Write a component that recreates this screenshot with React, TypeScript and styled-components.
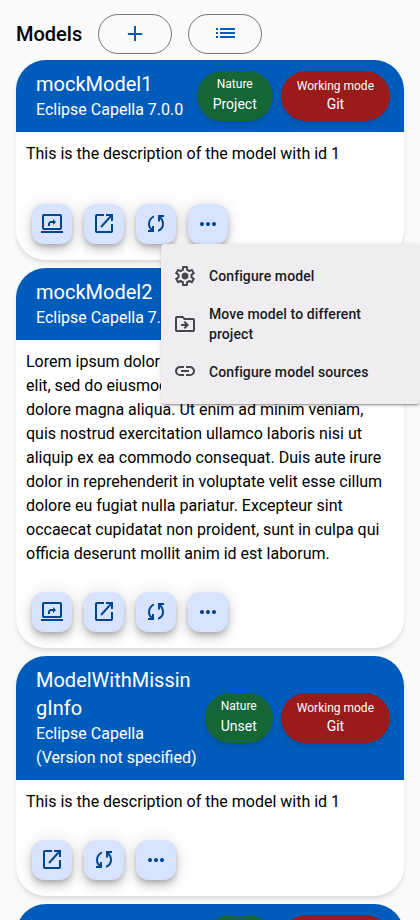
import React from "react";
import styled, { createGlobalStyle } from "styled-components";

const GlobalStyle = createGlobalStyle`
  *, *::before, *::after { box-sizing: border-box; }
  html, body { margin: 0; height: 100%; overflow: hidden; }
  body {
    background: #fafafa;
    color: #000;
    font-family: Roboto, sans-serif;
    font-size: 16px;
    line-height: 24px;
  }
`;

const icons = {
  add: "M440-440H195v-80h245v-280h80v280h250v80H520v240h-80v-240Z",
  list: "M280-640v-80h600v80H280Zm0 160v-80h600v80H280Zm0 160v-80h600v80H280ZM120-640v-80h80v80h-80Zm0 160v-80h80v80h-80Zm0 160v-80h80v80h-80Z",
  share:
    "M320-400h80v-80q0-17 11.5-28.5T440-520h80v80l120-120-120-120v80h-80q-50 0-85 35t-35 85v120ZM160-240q-33 0-56.5-23.5T80-320v-480q0-33 23.5-56.5T160-880h640q33 0 56.5 23.5T880-800v480q0 33-23.5 56.5T800-240H160Zm0-80h640v-480H160v480ZM40-120v-80h880v80H40Z",
  open: "M200-120q-33 0-56.5-23.5T120-200v-600q0-33 23.5-56.5T200-880h280v80H200v600h560v-280h80v280q0 33-23.5 56.5T760-120H200Zm188-212-56-56 372-412H560v-80h280v280h-80v-144L388-332Z",
  sync: "M160-160v-80h110l-16-14q-52-46-73-105t-21-119q0-111 66.5-207.5T400-820v84q-72 26-116 98.5T240-478q0 45 17 87.5t53 78.5l10 10v-98h80v240H160Zm400-10v-84q72-26 116-88.5T720-482q0-45-17-97.5T650-678l-10-10v108h-80v-260h240v80H690l16 24q49 49 71.5 126.5T800-482q0 111-66.5 197.5T560-170Z",
  more: "M240-400q-33 0-56.5-23.5T160-480q0-33 23.5-56.5T240-560q33 0 56.5 23.5T320-480q0 33-23.5 56.5T240-400Zm240 0q-33 0-56.5-23.5T400-480q0-33 23.5-56.5T480-560q33 0 56.5 23.5T560-480q0 33-23.5 56.5T480-400Zm240 0q-33 0-56.5-23.5T640-480q0-33 23.5-56.5T720-560q33 0 56.5 23.5T800-480q0 33-23.5 56.5T720-400Z",
  settings:
    "m370-80-16-128q-13-5-24.5-12T307-235l-119 50L78-375l103-78q-1-7-1-13.5v-27q0-6.5 1-13.5L78-585l110-190 119 50q11-8 23-15t24-12l16-128h220l16 128q13 5 24.5 12t22.5 15l119-50 110 190-103 78q1 7 1 13.5v27q0 6.5-2 13.5l103 78-110 190-118-50q-11 8-23 15t-24 12L590-80H370Zm70-80h79l14-106q31-8 57.5-23.5T639-327l99 41 39-68-86-65q5-14 7-29.5t2-31.5q0-16-2-31.5t-7-29.5l86-65-39-68-99 42q-22-23-48.5-38.5T533-694l-13-106h-79l-14 106q-31 8-57.5 23.5T321-633l-99-41-39 68 86 64q-5 15-7 30t-2 32q0 16 2 31t7 30l-86 65 39 68 99-42q22 23 48.5 38.5T427-266l13 106Zm42-180q58 0 99-41t41-99q0-58-41-99t-99-41q-59 0-99.5 41T342-480q0 58 40.5 99t99.5 41Z",
  move: "m488-400-64 64 56 56 160-160-160-160-56 56 64 64H320v80h168ZM160-160q-33 0-56.5-23.5T80-240v-480q0-33 23.5-56.5T160-800h240l80 80h320q33 0 56.5 23.5T880-640v400q0 33-23.5 56.5T800-160H160Zm0-80h640v-400H447l-80-80H160v480Z",
  link: "M440-320H280q-83 0-141.5-58.5T80-520q0-83 58.5-141.5T280-720h160v80H280q-50 0-85 35t-35 85q0 50 35 85t85 35h160v80ZM320-480v-80h320v80H320Zm200 160v-80h160q50 0 85-35t35-85q0-50-35-85t-85-35H520v-80h160q83 0 141.5 58.5T880-520q0 83-58.5 141.5T680-320H520Z",
};

type IconName = keyof typeof icons;

const IconSvg = styled.svg`
  width: 24px;
  height: 24px;
  flex: none;
  fill: currentColor;
`;

const Icon = ({ name }: { name: IconName }) => (
  <IconSvg viewBox="0 -960 960 960" aria-hidden="true">
    <path d={icons[name]} />
  </IconSvg>
);

const Page = styled.main`
  height: 920px;
  overflow: hidden;
  padding: 14px 16px 0;
`;

const Toolbar = styled.header`
  display: flex;
  align-items: center;
  gap: 16px;
  height: 40px;
  margin-bottom: 6px;
`;

const Heading = styled.h1`
  margin: 0;
  width: 66px;
  font-size: 20px;
  line-height: 28px;
  font-weight: 500;
  white-space: nowrap;
`;

const OutlinedButton = styled.button`
  display: flex;
  align-items: center;
  justify-content: center;
  width: 74px;
  height: 40px;
  padding: 0;
  border: 1px solid #74777f;
  border-radius: 20px;
  background: transparent;
  color: #005cbb;
`;

const CardList = styled.div`
  display: flex;
  flex-direction: column;
  gap: 8px;
`;

const Card = styled.article`
  display: flex;
  flex-direction: column;
  min-height: 200px;
  border-radius: 30px;
  background: #fff;
  box-shadow: 0 4px 6px -1px rgba(0, 0, 0, 0.1), 0 2px 4px -2px rgba(0, 0, 0, 0.1);
`;

const CardHeader = styled.div`
  display: flex;
  align-items: center;
  justify-content: space-between;
  padding: 10px 14px 10px 20px;
  border-radius: 30px 30px 0 0;
  background: #005cbb;
  color: #fff;
`;

const CardTitles = styled.div`
  flex: 1;
  min-width: 0;
`;

const CardTitle = styled.div`
  font-size: 20px;
  line-height: 28px;
  overflow-wrap: anywhere;
`;

const Version = styled.div`
  white-space: pre-line;
`;

const Badges = styled.div`
  display: flex;
  gap: 8px;
  margin-left: 8px;
`;

const Badge = styled.div<{ $tone: "green" | "red" }>`
  display: flex;
  flex-direction: column;
  align-items: center;
  height: 50px;
  padding: ${(p) => (p.$tone === "green" ? "3px" : "7px")} 16px 0;
  border-radius: 25px;
  background: ${(p) => (p.$tone === "green" ? "#166534" : "#991b1b")};
  box-shadow: 0 4px 6px -1px rgba(0, 0, 0, 0.1), 0 2px 4px -2px rgba(0, 0, 0, 0.1);
  white-space: nowrap;
`;

const BadgeLabel = styled.span<{ $tall: boolean }>`
  font-size: 12px;
  line-height: ${(p) => (p.$tall ? 20 : 16)}px;
`;

const BadgeValue = styled.span`
  font-size: 14px;
  line-height: 20px;
`;

const Description = styled.p`
  margin: 0;
  padding: 10px;
`;

const Actions = styled.div`
  display: flex;
  gap: 12px;
  margin-top: auto;
  padding: 16px;
`;

const FabButton = styled.button`
  display: flex;
  align-items: center;
  justify-content: center;
  width: 40px;
  height: 40px;
  padding: 0;
  border: 0;
  border-radius: 12px;
  background: #d7e3ff;
  color: #00458f;
  box-shadow: 0 3px 5px -1px rgba(0, 0, 0, 0.2), 0 6px 10px rgba(0, 0, 0, 0.14),
    0 1px 18px rgba(0, 0, 0, 0.12);
`;

const Menu = styled.div`
  position: absolute;
  top: 244px;
  left: 161px;
  width: 259px;
  padding: 8px 0;
  border-radius: 4px;
  background: #efedf0;
  color: #1a1b1f;
  box-shadow: 0 3px 1px -2px rgba(0, 0, 0, 0.2), 0 2px 2px rgba(0, 0, 0, 0.14),
    0 1px 5px rgba(0, 0, 0, 0.12);
`;

const MenuItem = styled.div`
  display: flex;
  align-items: center;
  gap: 12px;
  min-height: 48px;
  padding: 0 12px;
  font-size: 14px;
  line-height: 20px;
  font-weight: 500;
  letter-spacing: 0.096px;

  svg {
    color: #44474e;
  }
`;

interface Model {
  name: string;
  version: string;
  nature: string;
  description: string;
  actions: IconName[];
}

const short = "This is the description of the model with id 1";

const models: Model[] = [
  {
    name: "mockModel1",
    version: "Eclipse Capella 7.0.0",
    nature: "Project",
    description: short,
    actions: ["share", "open", "sync", "more"],
  },
  {
    name: "mockModel2",
    version: "Eclipse Capella 7.0.0",
    nature: "Project",
    description:
      "Lorem ipsum dolor sit amet, consectetur adipiscing elit, sed do eiusmod tempor incididunt ut labore et dolore magna aliqua. Ut enim ad minim veniam, quis nostrud exercitation ullamco laboris nisi ut aliquip ex ea commodo consequat. Duis aute irure dolor in reprehenderit in voluptate velit esse cillum dolore eu fugiat nulla pariatur. Excepteur sint occaecat cupidatat non proident, sunt in culpa qui officia deserunt mollit anim id est laborum.",
    actions: ["share", "open", "sync", "more"],
  },
  {
    name: "ModelWithMissingInfo",
    version: "Eclipse Capella\n(Version not specified)",
    nature: "Unset",
    description: short,
    actions: ["open", "sync", "more"],
  },
  {
    name: "mockModel4",
    version: "Eclipse Capella 7.0.0",
    nature: "Unset",
    description: short,
    actions: ["share", "open", "sync", "more"],
  },
];

const ModelCard = ({ model }: { model: Model }) => (
  <Card>
    <CardHeader>
      <CardTitles>
        <CardTitle>{model.name}</CardTitle>
        <Version>{model.version}</Version>
      </CardTitles>
      <Badges>
        <Badge $tone="green">
          <BadgeLabel $tall>Nature</BadgeLabel>
          <BadgeValue>{model.nature}</BadgeValue>
        </Badge>
        <Badge $tone="red">
          <BadgeLabel $tall={false}>Working mode</BadgeLabel>
          <BadgeValue>Git</BadgeValue>
        </Badge>
      </Badges>
    </CardHeader>
    <Description>{model.description}</Description>
    <Actions>
      {model.actions.map((name) => (
        <FabButton key={name} aria-label={name}>
          <Icon name={name} />
        </FabButton>
      ))}
    </Actions>
  </Card>
);

export default function App() {
  return (
    <>
      <GlobalStyle />
      <Page>
        <Toolbar>
          <Heading>Models</Heading>
          <OutlinedButton aria-label="Add model">
            <Icon name="add" />
          </OutlinedButton>
          <OutlinedButton aria-label="Reorder models">
            <Icon name="list" />
          </OutlinedButton>
        </Toolbar>
        <CardList>
          {models.map((model) => (
            <ModelCard key={model.name} model={model} />
          ))}
        </CardList>
      </Page>
      <Menu role="menu">
        <MenuItem role="menuitem">
          <Icon name="settings" />
          Configure model
        </MenuItem>
        <MenuItem role="menuitem">
          <Icon name="move" />
          Move model to different project
        </MenuItem>
        <MenuItem role="menuitem">
          <Icon name="link" />
          Configure model sources
        </MenuItem>
      </Menu>
    </>
  );
}
